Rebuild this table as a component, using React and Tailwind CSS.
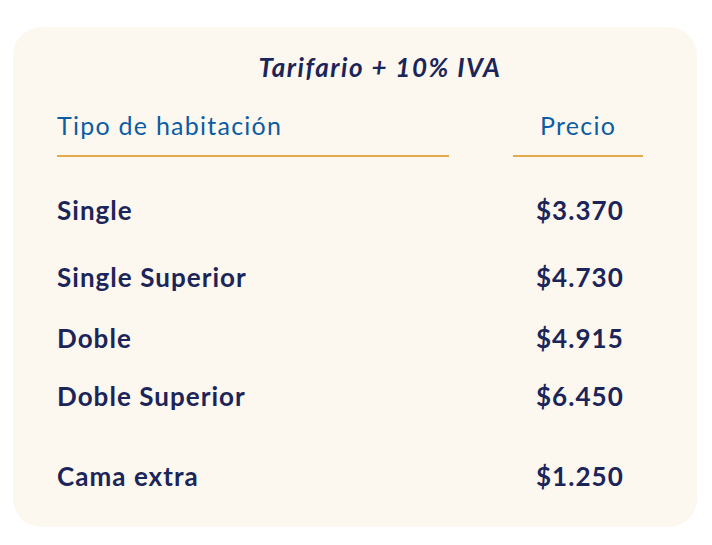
const rows = [
  { name: 'Single', price: '$3.370', cls: 'h-[67px]' },
  { name: 'Single Superior', price: '$4.730', cls: 'h-[61px]' },
  { name: 'Doble', price: '$4.915', cls: 'h-[58px]' },
  { name: 'Doble Superior', price: '$6.450', cls: 'h-[80px]' },
  { name: 'Cama extra', price: '$1.250', cls: 'h-[30px]' },
];

export default function App() {
  return (
    <div className="w-[712px] h-[545px] bg-white pt-[27px] pl-[13px]" style={{ fontFamily: 'Lato, "Open Sans", sans-serif' }}>
      <div className="w-[684px] h-[500px] bg-[#fcf8ef] rounded-[28px] pt-[20px] pl-[44px] pr-[54px]">
        <h1 className="text-center pl-[60px] text-[26px] leading-[40px] font-bold italic tracking-[0.06em] text-[#1b2559]">
          Tarifario + 10% IVA
        </h1>
        <div className="flex mt-[18px]">
          <div className="w-[392px]">
            <div className="text-[25px] leading-[40px] tracking-[0.05em] text-[#0c5ca4]">Tipo de habitación</div>
            <div className="h-[2px] bg-[#e4aa4c] mt-[10px]" />
          </div>
          <div className="w-[130px] ml-[64px]">
            <div className="text-[25px] leading-[40px] tracking-[0.05em] text-[#0c5ca4] text-center">Precio</div>
            <div className="h-[2px] bg-[#e4aa4c] mt-[10px]" />
          </div>
        </div>
        <div className="mt-[38px] text-[26px] font-bold tracking-[0.04em] text-[#1b2559]">
          {rows.map((r) => (
            <div key={r.name} className={`flex items-start ${r.cls}`}>
              <span className="w-[479px] leading-[30px]">{r.name}</span>
              <span className="leading-[30px]">{r.price}</span>
            </div>
          ))}
        </div>
      </div>
    </div>
  );
}
